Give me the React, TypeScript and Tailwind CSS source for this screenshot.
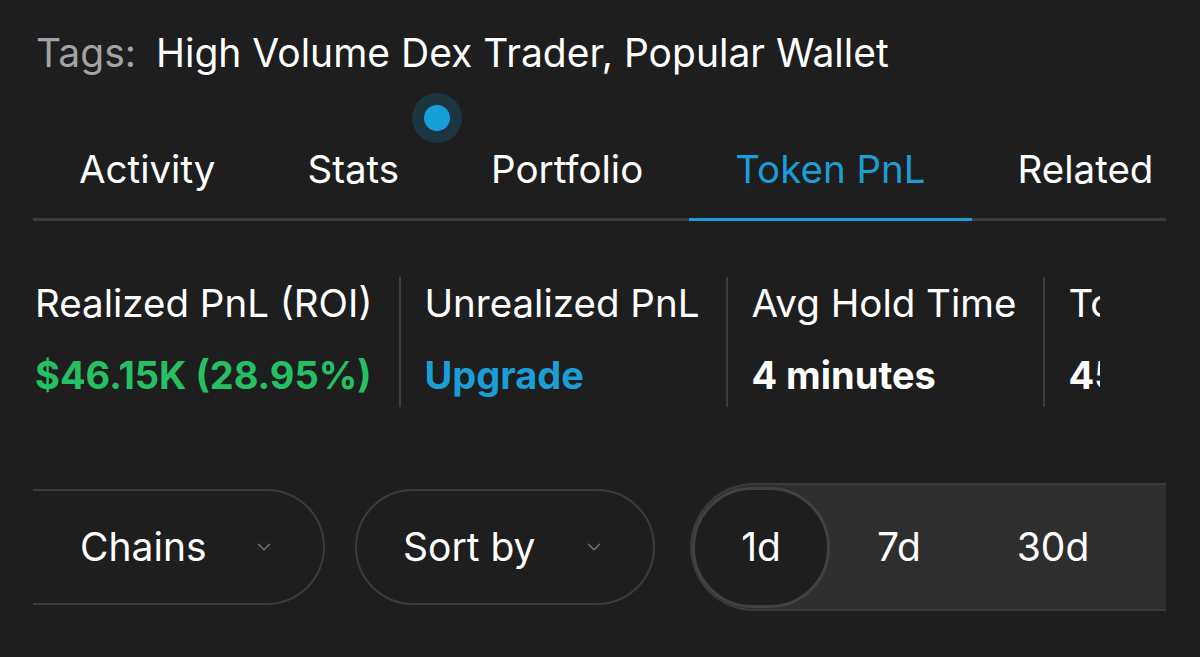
import { ChevronDown } from 'lucide-react';

const TABS = ['Activity', 'Stats', 'Portfolio', 'Token PnL', 'Related'];
const ACTIVE = 'Token PnL';

const STATS = [
  { label: 'Realized PnL (ROI)', value: '$46.15K (28.95%)', tone: 'text-[#25c064]' },
  { label: 'Unrealized PnL', value: 'Upgrade', tone: 'text-[#1b9dd6]' },
  { label: 'Avg Hold Time', value: '4 minutes', tone: 'text-white' },
  { label: 'Total Trades', value: '45', tone: 'text-white' },
];

const RANGES = ['1d', '7d', '30d'];

export default function App() {
  return (
    <div className="h-[657px] w-[1200px] overflow-hidden bg-[#1e1e1e] font-['Inter',sans-serif] text-white">
      <div className="flex items-center gap-[20px] pl-[36px] pt-[30px] text-[39px] leading-[46px]">
        <span className="text-[#a3a3a3]">Tags:</span>
        <span>High Volume Dex Trader, Popular Wallet</span>
      </div>

      <div className="ml-[412px] mt-[17px] flex h-[50px] w-[50px] items-center justify-center rounded-full bg-[#1d3441]">
        <div className="h-[26px] w-[26px] rounded-full bg-[#16a0d9]" />
      </div>

      <div className="ml-[33px] flex w-[1133px] border-b-[3px] border-[#3a3a3a]">
        {TABS.map((t) => (
          <div
            key={t}
            className={
              'relative -mb-[3px] whitespace-nowrap px-[46px] pb-[26px] pt-[3px] text-[38.5px] leading-[46px] ' +
              (t === ACTIVE ? 'border-b-[3px] border-[#1b9dd6] text-[#1b9dd6]' : 'border-b-[3px] border-transparent')
            }>
            {t}
          </div>
        ))}
      </div>

      <div className="ml-[35px] mt-[56px] flex w-[1065px] overflow-hidden">
        {STATS.map((s, i) => (
          <div
            key={s.label}
            className={
              'shrink-0 pr-[27px] ' + (i > 0 ? 'border-l-2 border-[#3d3d3d] pl-[23px]' : '')
            }>
            <div className="whitespace-nowrap pt-[4px] text-[38.5px] leading-[44px]">{s.label}</div>
            <div className={'whitespace-nowrap pb-[10px] pt-[28px] text-[38px] font-bold leading-[44px] ' + s.tone}>
              {s.value}
            </div>
          </div>
        ))}
      </div>

      <div className="mt-[76px] flex items-center">
        <div className="w-[33px] shrink-0" />
        <div className="flex h-[116px] w-[292px] shrink-0 items-center justify-between rounded-r-full border-y-2 border-r-2 border-[#3c3c3c] pl-[47px] pr-[48px] text-[39px]">
          <span>Chains</span>
          <ChevronDown className="h-[22px] w-[22px] text-[#777]" strokeWidth={1.5} />
        </div>
        <div className="ml-[30px] flex h-[116px] w-[300px] shrink-0 items-center justify-between rounded-full border-2 border-[#3c3c3c] pl-[46px] pr-[48px] text-[39px]">
          <span>Sort by</span>
          <ChevronDown className="h-[22px] w-[22px] text-[#777]" strokeWidth={1.5} />
        </div>
        <div className="ml-[35px] flex h-[128px] w-[476px] shrink-0 items-center rounded-l-full border-y-2 border-l-2 border-[#3a3a3a] bg-[#2e2e2e] text-[39px]">
          {RANGES.map((r, i) => (
            <div
              key={r}
              className={
                i === 0
                  ? 'flex h-[121px] w-[138px] items-center justify-center rounded-full border-[3px] border-[#414141] bg-[#1e1e1e]'
                  : i === 1
                    ? 'flex w-[138px] items-center justify-center'
                    : 'flex w-[170px] items-center justify-center'
              }>
              {r}
            </div>
          ))}
        </div>
      </div>
    </div>
  );
}
